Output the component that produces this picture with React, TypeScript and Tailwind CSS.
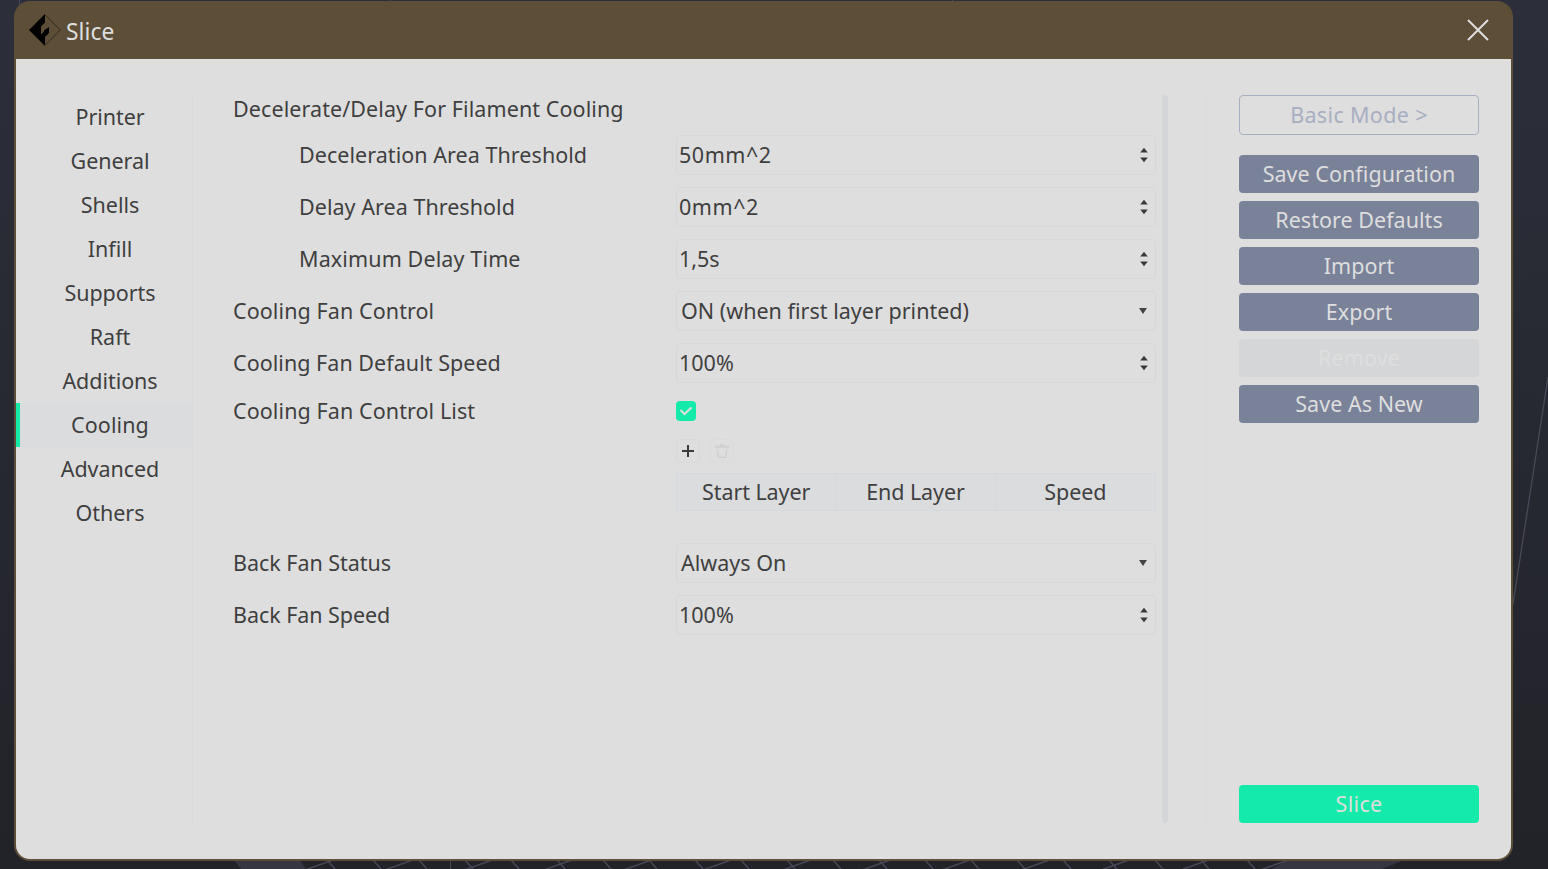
import type { ReactNode } from "react";

const tabs = ["Printer", "General", "Shells", "Infill", "Supports", "Raft", "Additions", "Cooling", "Advanced", "Others"];

const gridFalling = Array.from({ length: 21 }, (_, i) => 327 + i * 46);
const gridRising = Array.from({ length: 13 }, (_, i) => 333 + i * 79.6);

function Backdrop() {
  return (
    <svg className="absolute inset-0" width="1548" height="869" fill="none" stroke="#484956">
      <path d="M234 860 H300 L306 869 H241Z M1288 860 H1404 L1382 869 H1271Z" fill="#353641" stroke="none" />
      {gridFalling.map((x) => (
        <path key={x} d={`M${x} 860 l8 9`} strokeWidth="1.4" />
      ))}
      {gridRising.map((x) => (
        <path key={x} d={`M${x} 860 l-28 10`} strokeWidth="1.4" />
      ))}
      <path d="M450.5 860 V869 M19.5 0 V5 M390.5 0 V1 M952.5 0 V1" />
      <path d="M1548 377 L1513 604" strokeWidth="1.3" />
    </svg>
  );
}

function Spin() {
  return (
    <svg width="8" height="16" viewBox="0 0 8 16" className="mr-[7px]" fill="#3a3a3a">
      <path d="M4 .8 L7.8 5.6 H.2Z M4 15.2 L7.8 10.4 H.2Z" />
    </svg>
  );
}

function Caret() {
  return (
    <svg width="8" height="6" viewBox="0 0 8 6" className="mr-2" fill="#444">
      <path d="M0 0 H8 L4 6Z" />
    </svg>
  );
}

function Field({ value, select }: { value: string; select?: boolean }) {
  const wide = value.includes("^");
  return (
    <div className="flex h-10 w-[480px] items-center justify-between rounded border border-[#d7d8da]">
      <span className={select ? "pl-1 tracking-[0.02px]" : wide ? "pl-0.5 tracking-[0.55px]" : "pl-0.5 tracking-normal"}>{value}</span>
      {select ? <Caret /> : <Spin />}
    </div>
  );
}

function Row({ label, indent, className, children }: { label: string; indent?: boolean; className: string; children?: ReactNode }) {
  return (
    <div className={"flex items-center " + className}>
      <div className={indent ? "w-[443px] pl-[66px]" : "w-[443px] whitespace-nowrap"}>{label}</div>
      {children}
    </div>
  );
}

function Action({ children }: { children: string }) {
  return <button className="h-[38px] rounded bg-[#7a8299] tracking-[0.04px] text-[#dedede]">{children}</button>;
}

export default function App() {
  return (
    <div className="relative flex h-[869px] w-[1548px] overflow-hidden bg-linear-to-b from-[#2c2f3a] to-[#222329] pt-px pl-[14px] font-['Noto_Sans',sans-serif] text-[21.5px] leading-7 tracking-[0.09px] text-[#3f3f3f]">
      <Backdrop />
      <main className="relative flex h-[860px] w-[1499px] flex-col overflow-hidden rounded-[16px] bg-[#5d4e38] px-0.5 pb-0.5">
        <header className="flex h-[58px] shrink-0 items-center justify-between pr-[22px] pl-[13px] text-[#dedede]">
          <div className="flex items-center gap-[5px]">
            <svg width="32" height="32" viewBox="0 0 32 32">
              <path d="M16 .7 L31.3 16 L16 31.3" fill="none" stroke="#332b1f" />
              <path d="M16 0 V8.5 L12 12.5 V20.5 L15 17.5 V16.5 L20 13 V19 L16 23 V32 L0 16Z" fill="#000" />
            </svg>
            <span className="pt-[3px] text-[22.8px]">Slice</span>
          </div>
          <svg width="22" height="22" viewBox="0 0 22 22" stroke="#dedede" strokeWidth="2">
            <path d="M1 1 L21 21 M21 1 L1 21" />
          </svg>
        </header>
        <div className="flex flex-1 rounded-b-[14px] bg-[#dedede] pt-9 pb-9">
          <nav className="flex w-[177px] flex-col border-r border-[#d9dadb] tracking-[-0.05px]">
            {tabs.map((t) => (
              <div
                key={t}
                className={
                  t === "Cooling"
                    ? "flex h-11 items-center justify-center border-l-4 border-[#14ebaa] bg-[#dbdcde] pl-2 tracking-[0.09px]"
                    : "flex h-11 items-center justify-center pl-3"
                }
              >
                {t}
              </div>
            ))}
          </nav>
          <section className="ml-10 flex w-[923px] flex-col">
            <Row label="Decelerate/Delay For Filament Cooling" className="h-7" />
            <Row label="Deceleration Area Threshold" indent className="mt-3 h-10 tracking-[0.05px]"><Field value="50mm^2" /></Row>
            <Row label="Delay Area Threshold" indent className="mt-3 h-10 tracking-[0.04px]"><Field value="0mm^2" /></Row>
            <Row label="Maximum Delay Time" indent className="mt-3 h-10 tracking-[0.13px]"><Field value="1,5s" /></Row>
            <Row label="Cooling Fan Control" className="mt-3 h-10"><Field select value="ON (when first layer printed)" /></Row>
            <Row label="Cooling Fan Default Speed" className="mt-3 h-10 tracking-[0.04px]"><Field value="100%" /></Row>
            <Row label="Cooling Fan Control List" className="mt-[18px] h-5">
              <div className="flex size-5 items-center justify-center rounded bg-[#14ebaa]">
                <svg width="14" height="10" viewBox="0 0 14 10" fill="none" stroke="#dedede" strokeWidth="2">
                  <path d="M1.5 4 L5.5 8 L12.5 1.5" />
                </svg>
              </div>
            </Row>
            <div className="mt-[18px] ml-[443px] flex gap-2.5">
              <button className="flex size-6 items-center justify-center rounded border border-[#d7d9dc]">
                <svg width="12" height="12" viewBox="0 0 12 12" stroke="#3a3a3a" strokeWidth="2">
                  <path d="M6 0 V12 M0 6 H12" />
                </svg>
              </button>
              <button className="flex size-6 items-center justify-center rounded border border-[#dadbdc]">
                <svg width="14" height="14" viewBox="0 0 14 14" fill="none" stroke="#cfd0d1" strokeWidth="1.4">
                  <path d="M0 2.7 H14 M4.7 1 H9.3" strokeWidth="2" />
                  <path d="M2.2 5 L3.2 13.2 H10.8 L11.8 5" />
                </svg>
              </button>
            </div>
            <div className="mt-2.5 ml-[443px] grid h-[38px] w-[480px] grid-cols-3 divide-x divide-[#d5d8dc] border border-[#d5d8dc] bg-[#dbdcde] text-center leading-9 tracking-[-0.08px]">
              <span>Start Layer</span>
              <span>End Layer</span>
              <span>Speed</span>
            </div>
            <Row label="Back Fan Status" className="mt-8 h-10 tracking-[-0.03px]"><Field select value="Always On" /></Row>
            <Row label="Back Fan Speed" className="mt-3 h-10 tracking-[-0.06px]"><Field value="100%" /></Row>
          </section>
          <div className="ml-1.5 w-1.5 rounded-full bg-[#d4d5d8]" />
          <aside className="ml-[38px] flex w-[273px] flex-col border-l border-[#d9dadb] pl-8">
            <button className="h-10 rounded border border-[#a8aec2] text-[#a8aec2] tracking-[0.35px]">Basic Mode &gt;</button>
            <div className="mt-5 flex flex-col gap-2">
              <Action>Save Configuration</Action>
              <Action>Restore Defaults</Action>
              <Action>Import</Action>
              <Action>Export</Action>
              <button disabled className="h-[38px] rounded bg-[#d5d6d8] text-[#dedede]">Remove</button>
              <Action>Save As New</Action>
            </div>
            <button className="mt-auto h-[38px] rounded bg-[#14ebaa] text-[#dedede] tracking-[0.3px]">Slice</button>
          </aside>
        </div>
      </main>
    </div>
  );
}
